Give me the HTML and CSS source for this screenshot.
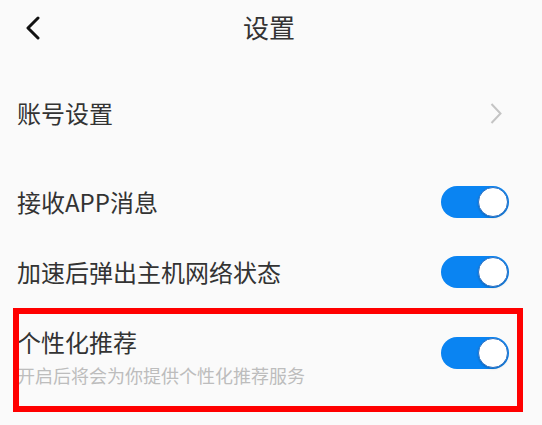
FILE: index.html
```html
<!DOCTYPE html>
<html lang="zh-CN">
<head>
<meta charset="utf-8">
<title>设置</title>
<link rel="stylesheet" href="styles.css">
</head>
<body>
<div class="page">
  <header class="topbar">
    <span class="back">
      <svg width="16" height="24" viewBox="0 0 16 24"><path d="M13 2 L3 12 L13 22" fill="none" stroke="#111" stroke-width="3" stroke-linecap="round" stroke-linejoin="round"/></svg>
    </span>
    <h1 class="title">设置</h1>
    <span class="spacer"></span>
  </header>

  <div class="row row-link">
    <span class="label">账号设置</span>
    <svg class="arrow" width="12" height="21" viewBox="0 0 12 21"><path d="M1.5 1 L10.5 10.5 L1.5 20" fill="none" stroke="#c4c4c4" stroke-width="2"/></svg>
  </div>

  <div class="row">
    <span class="label">接收APP消息</span>
    <span class="switch on"><span class="knob"></span></span>
  </div>

  <div class="row">
    <span class="label">加速后弹出主机网络状态</span>
    <span class="switch on"><span class="knob"></span></span>
  </div>

  <div class="row row-tall">
    <div class="texts">
      <span class="label">个性化推荐</span>
      <span class="desc">开启后将会为你提供个性化推荐服务</span>
    </div>
    <span class="switch on"><span class="knob"></span></span>
  </div>

  <div class="highlight"></div>
</div>
</body>
</html>
```

FILE: styles.css
```css
html, body {
  margin: 0;
  padding: 0;
  background: #fafafa;
}
.page {
  position: relative;
  width: 542px;
  height: 425px;
  overflow: hidden;
  font-family: "Noto Sans CJK SC", "Noto Sans", sans-serif;
  color: #333;
}
.topbar {
  height: 54px;
  display: grid;
  grid-template-columns: 80px 1fr 80px;
  align-items: center;
}
.back {
  display: flex;
  padding-left: 25px;
  padding-top: 1px;
}
.title {
  margin: 0;
  text-align: center;
  font-size: 26px;
  font-weight: 400;
  line-height: 34px;
  color: #333;
  padding-right: 4px;
}
.row {
  height: 70px;
  display: flex;
  align-items: center;
  justify-content: space-between;
  padding: 0 33px 0 17px;
}
.row-link {
  margin-top: 24px;
  margin-bottom: 19px;
  padding-right: 40px;
}
.label {
  font-size: 24px;
  line-height: 32px;
  color: #333;
}
.arrow {
  display: block;
}
.switch {
  width: 68px;
  height: 32px;
  border-radius: 16px;
  background: #0a84f2;
  display: flex;
  align-items: center;
  justify-content: flex-end;
  padding: 1px;
  box-sizing: border-box;
}
.knob {
  width: 30px;
  height: 30px;
  border-radius: 50%;
  background: #fff;
  box-sizing: border-box;
  border: 1.5px solid #2a70c4;
  box-shadow: 0 1px 2px rgba(0,0,0,0.2);
}
.row-tall {
  height: 100px;
  align-items: flex-start;
  padding-top: 19px;
  box-sizing: border-box;
}
.row-tall .switch {
  margin-top: 11px;
}
.texts {
  display: flex;
  flex-direction: column;
  gap: 5px;
}
.desc {
  font-size: 18px;
  line-height: 24px;
  color: #bdbdbd;
}
.highlight {
  position: absolute;
  left: 13px;
  top: 308px;
  width: 510px;
  height: 104px;
  box-sizing: border-box;
  border: 6px solid #f00;
  pointer-events: none;
}
```
